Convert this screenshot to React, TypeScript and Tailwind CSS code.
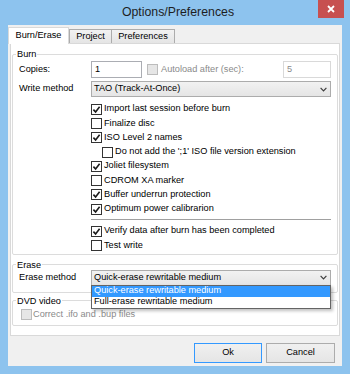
import React from "react";

type BoxProps = { checked?: boolean; disabled?: boolean };

const CheckBox = ({ checked, disabled }: BoxProps) => (
  <span
    className={
      disabled
        ? "flex h-[11px] w-[11px] shrink-0 items-center justify-center border border-[#bcbcbc] bg-[#e6e6e6]"
        : "flex h-[11px] w-[11px] shrink-0 items-center justify-center border border-[#333333] bg-white"
    }
  >
    {checked && (
      <svg width="9" height="9" viewBox="0 0 9 9">
        <path d="M1.4 4.6 3.6 6.9 7.6 1.7" fill="none" stroke="#1a1a1a" strokeWidth="1.6" />
      </svg>
    )}
  </span>
);

const Option = ({ label, checked, indent }: { label: string; checked?: boolean; indent?: boolean }) => (
  <div
    className={
      indent
        ? "flex h-[14.3px] items-center gap-[2px] pl-[83px]"
        : "flex h-[14.3px] items-center gap-[2px] pl-[72px]"
    }
  >
    <CheckBox checked={checked} />
    <span>{label}</span>
  </div>
);

const Chevron = () => (
  <svg width="7" height="5" viewBox="0 0 7 5" className="mr-[3px] shrink-0">
    <path d="M0.6 0.9 3.5 3.8 6.4 0.9" fill="none" stroke="#3c3c3c" strokeWidth="1.2" />
  </svg>
);

const Group = ({ title, className, children }: { title: string; className: string; children: React.ReactNode }) => (
  <fieldset className={`mx-[1px] rounded-[2px] border border-[#dcdcdc] ${className}`}>
    <legend className="ml-[3px] px-[1px] leading-[12px]">{title}</legend>
    {children}
  </fieldset>
);

export default function App() {
  return (
    <div className="flex h-[374px] w-[350px] flex-col bg-[#8dc3ee] font-['Liberation_Sans',Arial,sans-serif] text-[9.2px] text-black">
      {/* title bar */}
      <div className="flex h-[25px] shrink-0 items-start">
        <div className="flex h-[25px] flex-1 items-center justify-center pl-[38px] text-[12.3px] text-[#1e1e1e]">
          Options/Preferences
        </div>
        <div className="mr-[6px] flex h-[18px] w-[26px] items-center justify-center bg-[#c75050]">
          <svg width="8" height="8" viewBox="0 0 8 8">
            <path d="M1 1 7 7M7 1 1 7" stroke="#fff" strokeWidth="1.8" />
          </svg>
        </div>
      </div>

      {/* client area */}
      <div className="mx-[8px] mb-[8px] flex flex-1 flex-col bg-[#f0f0f0]">
        <div className="flex h-[18px] shrink-0 items-start pt-[2px]">
          <div className="relative z-10 flex h-[17px] w-[61px] items-center justify-center border-x border-t border-[#d9d9d9] bg-white">
            Burn/Erase
          </div>
          <div className="mt-[2px] flex h-[14px] w-[43px] items-center justify-center border-x border-t border-[#acacac] bg-linear-to-b from-[#f2f2f2] to-[#e5e5e5]">
            Project
          </div>
          <div className="mt-[2px] flex h-[14px] w-[63px] items-center justify-center border-r border-t border-[#acacac] bg-linear-to-b from-[#f2f2f2] to-[#e5e5e5]">
            Preferences
          </div>
        </div>

        <div className="mx-[2px] h-[293px] shrink-0 border border-[#d9d9d9] bg-white pt-[4px]">
          <Group title="Burn" className="">
            <div className="px-[6px] pb-[1px]">
              <div className="mt-[1px] flex h-[17px] items-center">
                <span className="w-[72px] shrink-0">Copies:</span>
                <div className="flex h-[17px] w-[51px] items-center border border-[#abadb3] bg-white pl-[3px]">1</div>
                <div className="ml-[5px] flex items-center gap-[3px] text-[#8a8a8a]">
                  <CheckBox disabled />
                  <span>Autoload after (sec):</span>
                </div>
                <div className="ml-auto flex h-[17px] w-[48px] items-center border border-[#d9d9d9] bg-white pl-[3px] text-[#8a8a8a]">
                  5
                </div>
              </div>
              <div className="mt-[3px] flex h-[16px] items-center">
                <span className="w-[72px] shrink-0">Write method</span>
                <div className="flex h-[16px] flex-1 items-center border border-[#acacac] bg-linear-to-b from-[#f2f2f2] to-[#e5e5e5] pl-[2px]">
                  <span className="flex-1">TAO (Track-At-Once)</span>
                  <Chevron />
                </div>
              </div>
              <div className="mt-[5px]">
                <Option label="Import last session before burn" checked />
                <Option label="Finalize disc" />
                <Option label="ISO Level 2 names" checked />
                <Option label="Do not add the ';1' ISO file version extension" indent />
                <Option label="Joliet filesystem" checked />
                <Option label="CDROM XA marker" />
                <Option label="Buffer underrun protection" checked />
                <Option label="Optimum power calibrarion" checked />
                <div className="h-[7.6px] pl-[72px] pt-[2.5px]">
                  <div className="border-t border-b border-t-[#a0a0a0] border-b-white" />
                </div>
                <Option label="Verify data after burn has been completed" checked />
                <Option label="Test write" />
              </div>
            </div>
          </Group>

          <Group title="Erase" className="mt-[4px]">
            <div className="-mt-px px-[6px] pb-[6px]">
              <div className="flex h-[16px] items-center">
                <span className="w-[72px] shrink-0">Erase method</span>
                <div className="relative flex h-[16px] flex-1 items-center border border-[#acacac] bg-linear-to-b from-[#f2f2f2] to-[#e5e5e5] pl-[2px]">
                  <span className="flex-1">Quick-erase rewritable medium</span>
                  <Chevron />
                  <div className="absolute left-[-1px] right-[-1px] top-full z-20 border border-[#646464] bg-white shadow-[2px_2px_3px_rgba(0,0,0,0.25)]">
                    <div className="flex h-[11px] items-center bg-[#3399ff] pl-[2px] text-white">
                      Quick-erase rewritable medium
                    </div>
                    <div className="flex h-[11px] items-center pl-[2px]">Full-erase rewritable medium</div>
                  </div>
                </div>
              </div>
            </div>
          </Group>

          <Group title="DVD video" className="mt-[2px]">
            <div className="mt-[1px] flex h-[14px] items-center gap-[1px] pb-0 pl-[8px] text-[#8a8a8a]">
              <CheckBox disabled />
              <span>Correct .ifo and .bup files</span>
            </div>
            <div className="h-[3px]" />
          </Group>
        </div>

        <div className="flex justify-end gap-[4px] pr-[7px] pt-[7px]">
          <div className="flex h-[20px] w-[68px] items-center justify-center border border-[#3399ff] bg-linear-to-b from-[#f0f0f0] to-[#e5e5e5]">
            Ok
          </div>
          <div className="flex h-[20px] w-[69px] items-center justify-center border border-[#acacac] bg-linear-to-b from-[#f0f0f0] to-[#e5e5e5]">
            Cancel
          </div>
        </div>
      </div>
    </div>
  );
}
